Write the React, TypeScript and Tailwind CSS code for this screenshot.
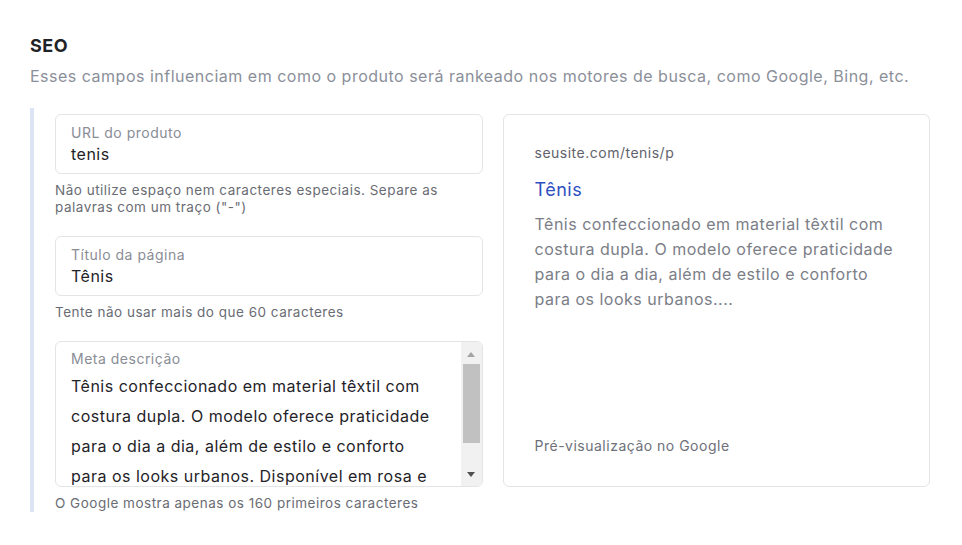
import React from 'react'

const font = { fontFamily: 'Inter, "Noto Sans", sans-serif' }

const description =
  'Tênis confeccionado em material têxtil com costura dupla. O modelo oferece praticidade para o dia a dia, além de estilo e conforto para os looks urbanos. Disponível em rosa e preto, com solado de borracha antiderrapante.'

const Field = ({ label, value }: { label: string; value: string }) => (
  <div className="rounded-md border border-[#e3e4e8] bg-white px-[15px] pt-2 pb-2">
    <div className="text-[14px] leading-5 text-[#8a8d96]">{label}</div>
    <div className="text-[16px] leading-[22px] text-[#1f2328]">{value}</div>
  </div>
)

const Helper = ({ children }: { children: React.ReactNode }) => (
  <p className="mt-2 text-[13.5px] leading-[17px] text-[#6a6c74]">{children}</p>
)

const FakeScrollbar = () => (
  <div className="flex w-[21px] flex-col bg-[#f1f1f1] py-[2px]">
    <div className="flex h-5 items-center justify-center">
      <svg width="8" height="5" viewBox="0 0 8 5"><path d="M0 5 L4 0 L8 5 Z" fill="#a3a3a3" /></svg>
    </div>
    <div className="mx-[2px] h-[79px] bg-[#c1c1c1]" />
    <div className="flex-1" />
    <div className="flex h-5 items-center justify-center">
      <svg width="8" height="5" viewBox="0 0 8 5"><path d="M0 0 L8 0 L4 5 Z" fill="#505050" /></svg>
    </div>
  </div>
)

export default function App() {
  return (
    <div className="min-h-screen bg-white px-[30px] pt-[35px] tracking-[0.5px]" style={font}>
      <h2 className="text-[18px] font-bold leading-[22px] text-[#1f2328]">SEO</h2>
      <p className="mt-[8px] text-[16px] leading-[22px] text-[#8b8f99]">
        Esses campos influenciam em como o produto será rankeado nos motores de busca, como Google, Bing, etc.
      </p>

      <div className="mt-[21px] w-[900px] border-l-4 border-[#dde4f6] pt-[6px] pl-[21px]">
        <div className="grid grid-cols-2 items-start gap-5">
          <div>
            <Field label="URL do produto" value="tenis" />
            <Helper>
              Não utilize espaço nem caracteres especiais. Separe as palavras com um traço ("-")
            </Helper>

            <div className="mt-5">
              <Field label="Título da página" value="Tênis" />
              <Helper>Tente não usar mais do que 60 caracteres</Helper>
            </div>

            <div className="mt-5">
              <div className="flex h-[146px] overflow-hidden rounded-md border border-[#e3e4e8] bg-white">
                <div className="flex-1 overflow-hidden pl-[15px] pr-[22px] pt-[7px]">
                  <div className="text-[14px] leading-5 text-[#8a8d96]">Meta descrição</div>
                  <div className="mt-[2px] text-[16px] leading-[30px] text-[#1f2328]">{description}</div>
                </div>
                <FakeScrollbar />
              </div>
              <Helper>O Google mostra apenas os 160 primeiros caracteres</Helper>
            </div>
          </div>

          <div className="flex h-[373px] flex-col rounded-md border border-[#e3e4e8] bg-white px-[31px] pt-[28px] pb-[30px]">
            <div className="text-[14px] leading-5 text-[#5f626b]">seusite.com/tenis/p</div>
            <div className="mt-[15px] text-[18px] leading-[24px] text-[#2f4fbf]">Tênis</div>
            <p className="mt-[10px] text-[16px] leading-[25px] text-[#7b7e87]">
              Tênis confeccionado em material têxtil com costura dupla. O modelo oferece praticidade para o dia a dia,
              além de estilo e conforto para os looks urbanos....
            </p>
            <div className="mt-auto text-[14px] leading-5 text-[#6e7079]">Pré-visualização no Google</div>
          </div>
        </div>
      </div>
    </div>
  )
}
